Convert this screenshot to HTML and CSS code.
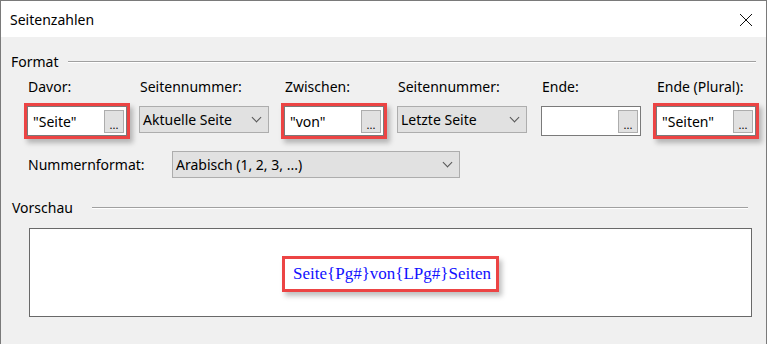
FILE: index.html
```html
<!DOCTYPE html>
<html lang="de">
<head>
  <meta charset="UTF-8">
  <meta name="viewport" content="width=device-width, initial-scale=1.0">
  <title>Seitenzahlen</title>
  <link rel="stylesheet" href="styles.css">
</head>
<body>

  <!-- Dialog window -->
  <div class="window">
    <div class="titlebar">
      <span class="title">Seitenzahlen</span>
      <svg class="close" width="14" height="14" viewBox="0 0 14 14">
        <path d="M1 1 L13 13 M13 1 L1 13" stroke="#111" stroke-width="1" fill="none"/>
      </svg>
    </div>

    <div class="content">
      <!-- Format group -->
      <div class="group-head">
        <span>Format</span>
        <div class="group-line format-line"></div>
      </div>

      <div class="fields">
        <div class="field">
          <label>Davor:</label>
          <div class="textbox marked"><span>"Seite"</span><button class="dots">...</button></div>
        </div>
        <div class="field">
          <label>Seitennummer:</label>
          <div class="combo"><span>Aktuelle Seite</span><span class="chevron"></span></div>
        </div>
        <div class="field">
          <label>Zwischen:</label>
          <div class="textbox marked"><span>"von"</span><button class="dots">...</button></div>
        </div>
        <div class="field">
          <label>Seitennummer:</label>
          <div class="combo"><span>Letzte Seite</span><span class="chevron"></span></div>
        </div>
        <div class="field">
          <label>Ende:</label>
          <div class="textbox"><span></span><button class="dots">...</button></div>
        </div>
        <div class="field">
          <label>Ende (Plural):</label>
          <div class="textbox marked"><span>"Seiten"</span><button class="dots">...</button></div>
        </div>
      </div>

      <div class="number-row">
        <label>Nummernformat:</label>
        <div class="combo wide"><span>Arabisch (1, 2, 3, ...)</span><span class="chevron"></span></div>
      </div>

      <!-- Preview group -->
      <div class="group-head preview-head">
        <span>Vorschau</span>
        <div class="group-line preview-line"></div>
      </div>

      <div class="preview">
        <span class="preview-text">Seite{Pg#}von{LPg#}Seiten</span>
      </div>
    </div>
  </div>

</body>
</html>
```

FILE: styles.css
```css
/* Basic dialog layout */
body {
  margin: 0;
  background-color: #fff;
  font-family: "Noto Sans", "Open Sans", sans-serif;
  font-size: 14px;
  color: #000;
  overflow: hidden;
}

.window {
  width: 767px;
  height: 344px;
  box-sizing: border-box;
  border: 1px solid #7a7a7a;
  border-bottom: none;
  background-color: #f0f0f0;
}

.titlebar {
  display: flex;
  align-items: center;
  justify-content: space-between;
  height: 36px;
  padding: 0 13px 0 9px;
  background-color: #fff;
}

.close {
  margin-top: 1px;
}

.content {
  padding-top: 15px;
}

/* Group headers with etched line */
.group-head {
  display: flex;
  align-items: center;
  padding-left: 10px;
}

.group-line {
  flex: 1;
  height: 0;
  border-top: 1px solid #a0a0a0;
  border-bottom: 1px solid #fff;
}

.format-line {
  margin-left: 9px;
  margin-right: 10px;
}

.preview-head {
  margin-top: 20px;
  padding-left: 11px;
}

.preview-line {
  margin-left: 19px;
  margin-right: 18px;
}

/* Row of fields */
.fields {
  display: grid;
  grid-template-columns: 112px 145px 113px 144px 115px 100px;
  margin-top: 6px;
  padding-left: 26px;
}

.field {
  display: flex;
  flex-direction: column;
  align-items: flex-start;
}

.field label {
  margin-left: 1px;
  margin-bottom: 10px;
}

.textbox {
  display: flex;
  align-items: center;
  justify-content: space-between;
  width: 100px;
  height: 30px;
  box-sizing: border-box;
  border: 1px solid #7a7a7a;
  background-color: #fff;
  padding: 2px 2px 2px 5px;
}

.textbox.marked {
  box-shadow: 0 0 0 3px #ec4444, 3px 4px 5px 3px rgba(0, 0, 0, 0.25);
}

.dots {
  width: 20px;
  height: 23px;
  margin-top: 1px;
  padding: 6px 0 0 0;
  border: 1px solid #adadad;
  background-color: #e1e1e1;
  font-family: "Noto Sans", sans-serif;
  font-size: 11px;
  line-height: 14px;
  color: #000;
}

.combo {
  display: flex;
  align-items: center;
  justify-content: space-between;
  width: 130px;
  height: 27px;
  box-sizing: border-box;
  border: 1px solid #adadad;
  background-color: #e1e1e1;
  padding: 0 8px 0 3px;
}

.combo.wide {
  width: 288px;
}

.chevron {
  width: 6px;
  height: 6px;
  margin-top: -4px;
  border-right: 1px solid #555;
  border-bottom: 1px solid #555;
  transform: rotate(45deg);
}

.number-row {
  display: flex;
  align-items: center;
  margin-top: 15px;
  padding-left: 27px;
}

.number-row label {
  width: 144px;
}

/* Preview box */
.preview {
  display: flex;
  align-items: center;
  justify-content: center;
  width: 723px;
  height: 89px;
  box-sizing: border-box;
  margin: 11px 0 0 28px;
  border: 1px solid #696969;
  background-color: #fff;
  padding-top: 3px;
}

.preview-text {
  border: 3px solid #ec4444;
  padding: 5px 5px 5px 8px;
  font-family: "Liberation Serif", serif;
  font-size: 17px;
  line-height: 20px;
  color: #1010ff;
  box-shadow: 3px 4px 5px rgba(0, 0, 0, 0.25);
}
```
